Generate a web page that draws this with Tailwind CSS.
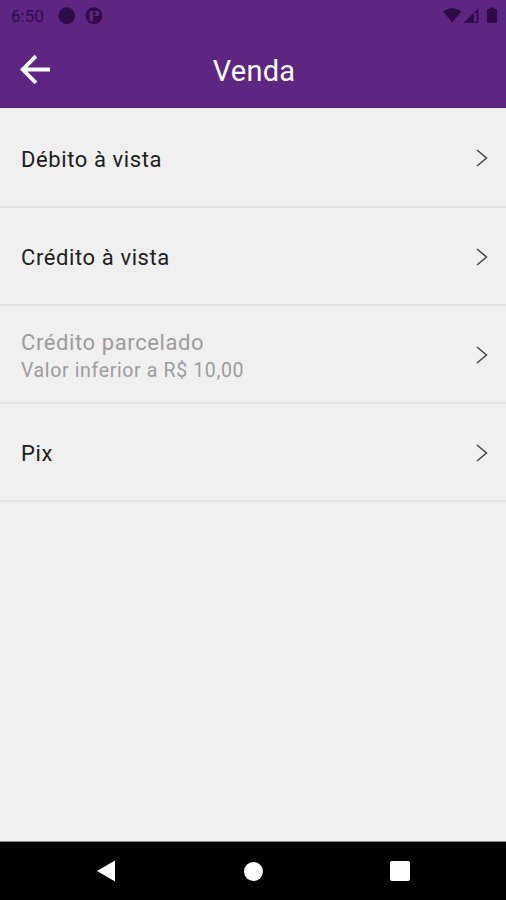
<!DOCTYPE html>
<html lang="pt-BR">
<head>
    <meta charset="UTF-8">
    <meta name="viewport" content="width=device-width, initial-scale=1.0">
    <title>Venda</title>
    <script src="https://cdn.jsdelivr.net/npm/@tailwindcss/browser@4"></script>
</head>
<body class="bg-[#f0f0f0] font-['Roboto',sans-serif]">
    <div class="flex flex-col w-full h-screen overflow-hidden">
        <!-- Status bar + header -->
        <header class="h-[108px] shrink-0 bg-[#5e2583] border-b border-[#521c78]">
            <div class="flex items-center justify-between h-8 pl-[11px] pr-2 text-[#2d0b47]">
                <div class="flex items-center">
                    <span class="w-[47px] text-[17px] leading-none">6:50</span>
                    <svg class="w-[46px] h-[18px]" viewBox="0 0 46 18">
                        <circle cx="8.7" cy="8.7" r="8.4" fill="currentColor"/>
                        <circle cx="36" cy="8.700" r="8.400" fill="currentColor"/>
                        <path d="M31.500 4H35V14H31.500Z" fill="#5e2583"/>
                        <path d="M36.200 4H39.500Q41.700 4 41.700 6.500T39.500 9H36.200V7.500H38V5.500H36.200Z" fill="#5e2583"/>
                    </svg>
                </div>
                <svg class="w-[56px] h-[18px]" viewBox="0 0 56 18" fill="currentColor">
                    <path d="M1 4.500Q10 -2.500 19.500 4.500L10.200 15.500Z"/>
                    <path fill-rule="evenodd" d="M36.500 1V16H21.500ZM32 6V14.800H34.800V6Z"/>
                    <path d="M48 .5h4v1.500h3V16H45V2h3Z"/>
                </svg>
            </div>
            <div class="grid grid-cols-[60px_1fr_60px] items-center h-[76px] text-white">
                <svg class="w-8 h-8 ml-5" viewBox="0 0 32 32" fill="none" stroke="currentColor" stroke-width="3.8">
                    <path d="M30 15.500H3M16 2.200L2.700 15.500L16 28.800"/>
                </svg>
                <h1 class="pt-0.5 pl-0.5 text-center text-[29px] leading-none tracking-[0.2px]">Venda</h1>
            </div>
        </header>

        <!-- Payment options -->
        <main class="flex-1 pt-[1.5px] text-[22px] leading-[28px] tracking-[0.6px] text-[#202020]">
            <div class="flex items-center justify-between h-[98.2px] pt-1 pl-[21px] pr-[17px] border-b-2 border-[#e4e4e4]">
                <span>Débito à vista</span>
                <svg class="w-[14px] h-[20px] mb-[3px]" viewBox="0 0 14 20" fill="none" stroke="#444" stroke-width="1.5"><path d="M2 2L11.500 10L2 18"/></svg>
            </div>
            <div class="flex items-center justify-between h-[98.2px] pt-1 pl-[21px] pr-[17px] border-b-2 border-[#e4e4e4]">
                <span>Crédito à vista</span>
                <svg class="w-[14px] h-[20px] mb-[2px]" viewBox="0 0 14 20" fill="none" stroke="#444" stroke-width="1.5"><path d="M2 2L11.500 10L2 18"/></svg>
            </div>
            <div class="flex items-center justify-between h-[98.2px] pt-1 pl-[21px] pr-[17px] border-b-2 border-[#e4e4e4]">
                <div class="flex flex-col pt-[3px] text-[#9c9c9c]">
                    <span>Crédito parcelado</span>
                    <span class="text-[19.5px] tracking-[0.64px]">Valor inferior a R$ 10,00</span>
                </div>
                <svg class="w-[14px] h-[20px] mb-[2px]" viewBox="0 0 14 20" fill="none" stroke="#444" stroke-width="1.5"><path d="M2 2L11.500 10L2 18"/></svg>
            </div>
            <div class="flex items-center justify-between h-[98.2px] pt-1 pl-[21px] pr-[17px] border-b-2 border-[#e4e4e4]">
                <span>Pix</span>
                <svg class="w-[14px] h-[20px] mb-[2px]" viewBox="0 0 14 20" fill="none" stroke="#444" stroke-width="1.5"><path d="M2 2L11.500 10L2 18"/></svg>
            </div>
        </main>

        <!-- Android navigation bar -->
        <nav class="flex items-center justify-between h-[59px] shrink-0 px-[96px] bg-black border-t border-[#888]">
            <svg class="w-5 h-[22px]" viewBox="0 0 20 22" fill="white"><path d="M1 11L19 .5V21.500Z"/></svg>
            <div class="w-[19px] h-[19px] rounded-full bg-white"></div>
            <div class="w-5 h-5 rounded-[2px] bg-white"></div>
        </nav>
    </div>
</body>
</html>
